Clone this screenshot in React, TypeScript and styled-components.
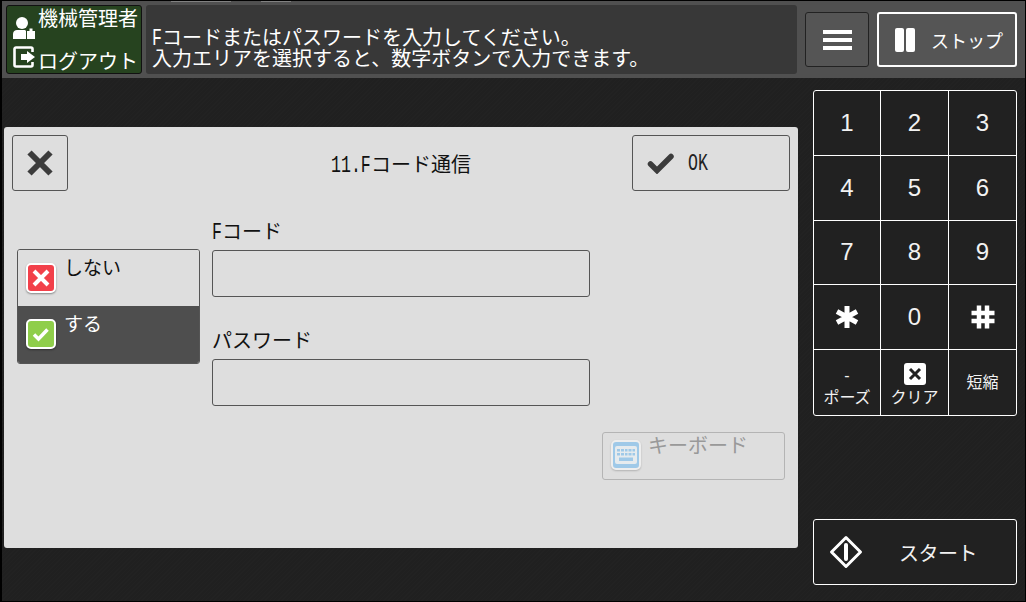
import styled, { createGlobalStyle } from "styled-components";

const GlobalStyle = createGlobalStyle`
  html, body {
    margin: 0;
    padding: 0;
    background: #000;
  }
  * {
    box-sizing: border-box;
  }
`;

const FONT = `"Liberation Sans", "Noto Sans CJK JP", sans-serif`;

const KEYS = ["1", "2", "3", "4", "5", "6", "7", "8", "9"];

export default function App() {
  return (
    <>
      <GlobalStyle />
      <Screen>
        <TopMarks>
          <TopMark $width={60} />
          <TopMark $width={30} />
        </TopMarks>
        <Header>
          <AdminBox>
            <AdminRow>
              <AdminIcon $top={9} viewBox="0 0 22 24">
                <circle cx="9" cy="7" r="6" fill="#fff" />
                <path d="M0 23v-5c0-2.500 2-4 4-4h7c1 0 2 .5 2 1v8z" fill="#fff" />
                <path d="M14 23v-8h2.500v-2.500h3V15H22v8z" fill="#fff" />
              </AdminIcon>
              <AdminName>機械管理者</AdminName>
            </AdminRow>
            <AdminRow>
              <AdminIcon $top={6} viewBox="0 0 22 24">
                <path
                  d="M19.500 6V3a1.500 1.500 0 0 0-1.500-1.500H3A1.500 1.500 0 0 0 1.500 3v16A1.500 1.500 0 0 0 3 20.500h15a1.500 1.500 0 0 0 1.500-1.500v-3"
                  fill="none"
                  stroke="#fff"
                  strokeWidth="2.600"
                />
                <path d="M8 8h6V5l8 6-8 6v-3H8z" fill="#fff" />
              </AdminIcon>
              <LogoutText>ログアウト</LogoutText>
            </AdminRow>
          </AdminBox>
          <MessageBox>
            <div>
              <Half $chars={1}>F</Half>コードまたはパスワードを入力してください。
            </div>
            <div>入力エリアを選択すると、数字ボタンで入力できます。</div>
          </MessageBox>
          <MenuButton>
            <MenuBar />
            <MenuBar />
            <MenuBar />
          </MenuButton>
          <StopButton>
            <PauseIcon>
              <PauseBar />
              <PauseBar />
            </PauseIcon>
            <StopLabel>ストップ</StopLabel>
          </StopButton>
        </Header>
        <Main>
          <LeftColumn>
            <Dialog>
              <DialogHead>
                <CloseButton>
                  <svg width="28" height="28" viewBox="0 0 28 28">
                    <path d="M3.500 3.500l21 21M24.500 3.500l-21 21" stroke="#3c3c3c" strokeWidth="6" />
                  </svg>
                </CloseButton>
                <DialogTitle>
                  <Half $chars={4}>11.F</Half>コード通信
                </DialogTitle>
                <OkButton>
                  <svg width="28" height="22" viewBox="0 0 28 22">
                    <path
                      d="M3.500 12l6.500 6.500L24 4.500"
                      fill="none"
                      stroke="#3c3c3c"
                      strokeWidth="5.500"
                      strokeLinecap="round"
                    />
                  </svg>
                  <OkLabel>
                    <Half $chars={2}>OK</Half>
                  </OkLabel>
                </OkButton>
              </DialogHead>
              <DialogBody>
                <ChoiceList>
                  <Choice>
                    <Badge $color="#f2404a">
                      <svg width="20" height="20" viewBox="0 0 20 20">
                        <path d="M3 3l14 14M17 3L3 17" stroke="#fff" strokeWidth="4" />
                      </svg>
                    </Badge>
                    <ChoiceLabel>しない</ChoiceLabel>
                  </Choice>
                  <Choice $selected>
                    <Badge $color="#8fce4a">
                      <svg width="20" height="20" viewBox="0 0 20 20">
                        <path d="M3 10.500l4.500 4.500 9-9.500" fill="none" stroke="#fff" strokeWidth="3.500" />
                      </svg>
                    </Badge>
                    <ChoiceLabel>する</ChoiceLabel>
                  </Choice>
                </ChoiceList>
                <Fields>
                  <Field>
                    <FieldLabel>
                      <Half $chars={1}>F</Half>コード
                    </FieldLabel>
                    <FieldInput />
                  </Field>
                  <Field>
                    <FieldLabel>パスワード</FieldLabel>
                    <FieldInput />
                  </Field>
                </Fields>
              </DialogBody>
              <KeyboardRow>
                <KeyboardButton>
                  <KeyboardBadge>
                    <svg width="22" height="20" viewBox="0 0 22 20">
                      <rect x="0" y="1" width="22" height="18" rx="2" fill="#e6ebee" />
                      <path
                        d="M2 4h3v2.500H2zM6 4h3v2.500H6zM10 4h2.500v2.500H10zM13.500 4h3v2.500h-3zM17.500 4H20v2.500h-2.500zM2 8h3v2.500H2zM6 8h3v2.500H6zM10 8h2.500v2.500H10zM13.500 8h3v2.500h-3zM17.500 8H20v2.500h-2.500zM4 12.500h14V16H4z"
                        fill="#9fc9e8"
                      />
                    </svg>
                  </KeyboardBadge>
                  <KeyboardLabel>キーボード</KeyboardLabel>
                </KeyboardButton>
              </KeyboardRow>
            </Dialog>
          </LeftColumn>
          <RightColumn>
            <Keypad>
              {KEYS.map((k) => (
                <Key key={k}>{k}</Key>
              ))}
              <Key>
                <svg width="26" height="26" viewBox="0 0 26 26">
                  <path d="M13 2v22M3 7.500l20 11M23 7.500l-20 11" stroke="#fff" strokeWidth="5" />
                </svg>
              </Key>
              <Key>0</Key>
              <Key>
                <svg width="26" height="26" viewBox="0 0 26 26">
                  <path d="M9 1.500v23M17 1.500v23M1.500 9h23M1.500 17h23" stroke="#fff" strokeWidth="4.500" />
                </svg>
              </Key>
              <StackedKey>
                <PauseDash>-</PauseDash>
                <span>ポーズ</span>
              </StackedKey>
              <StackedKey>
                <ClearIcon>
                  <svg width="14" height="14" viewBox="0 0 14 14">
                    <path d="M2 2l10 10M12 2L2 12" stroke="#222" strokeWidth="3" />
                  </svg>
                </ClearIcon>
                <span>クリア</span>
              </StackedKey>
              <SmallKey>短縮</SmallKey>
            </Keypad>
            <StartButton>
              <svg width="34" height="34" viewBox="0 0 34 34">
                <path
                  d="M17 2.500L31.500 17 17 31.500 2.500 17z"
                  fill="none"
                  stroke="#fff"
                  strokeWidth="3"
                  strokeLinejoin="round"
                />
                <path d="M17 10v14" stroke="#fff" strokeWidth="4" strokeLinecap="round" />
              </svg>
              <StartLabel>スタート</StartLabel>
            </StartButton>
          </RightColumn>
        </Main>
      </Screen>
    </>
  );
}

const Screen = styled.div`
  position: relative;
  width: 1026px;
  height: 602px;
  display: flex;
  flex-direction: column;
  border: 1px solid #000;
  border-left-width: 2px;
  background: #212121;
  font-family: ${FONT};
  overflow: hidden;
`;
const TopMarks = styled.div`
  position: absolute;
  top: 0;
  left: 169px;
  display: flex;
  gap: 30px;
`;
const TopMark = styled.div<{ $width: number }>`
  width: ${(p) => p.$width}px;
  height: 1px;
  background: #808080;
`;
/* the panel's half-width latin letters are tall and narrow */
const Half = styled.span<{ $chars: number }>`
  display: inline-block;
  width: ${(p) => p.$chars * 10}px;
  font-family: "Liberation Mono", monospace;
  font-size: 23px;
  line-height: 0;
  white-space: nowrap;
  transform: scaleX(0.72);
  transform-origin: left;
`;
const Header = styled.div`
  height: 77px;
  flex: none;
  display: flex;
  padding: 4px 8px 0 4px;
  background: #505050;
`;
const AdminBox = styled.div`
  width: 136px;
  height: 69px;
  display: flex;
  flex-direction: column;
  padding: 1px 2px 0 6px;
  background: #26431f;
  border: 1px solid #111;
  border-radius: 3px;
  color: #fff;
`;
const AdminRow = styled.div`
  height: 34px;
  display: flex;
  align-items: flex-start;
`;
const AdminIcon = styled.svg<{ $top: number }>`
  width: 22px;
  height: 24px;
  margin-top: ${(p) => p.$top}px;
  flex: none;
`;
const AdminName = styled.div`
  margin-left: 3px;
  font-size: 20px;
  line-height: 24px;
  white-space: nowrap;
`;
const LogoutText = styled.div`
  margin: 10px 0 0 3px;
  font-size: 20px;
  line-height: 24px;
  white-space: nowrap;
`;
const MessageBox = styled.div`
  width: 651px;
  height: 69px;
  margin-left: 4px;
  padding: 23px 0 0 6px;
  background: #383838;
  border-radius: 3px;
  color: #fff;
  font-size: 20px;
  line-height: 21px;
  white-space: nowrap;
`;
const MenuButton = styled.div`
  width: 64px;
  height: 55px;
  margin: 7px 0 0 8px;
  display: flex;
  flex-direction: column;
  align-items: center;
  justify-content: center;
  gap: 4px;
  background: #555;
  border: 1px solid #222;
  border-radius: 3px;
`;
const MenuBar = styled.div`
  width: 29px;
  height: 4px;
  background: #fff;
`;
const StopButton = styled.div`
  width: 140px;
  height: 55px;
  margin: 7px 0 0 8px;
  display: flex;
  align-items: center;
  padding-left: 16px;
  border: 2px solid #fff;
  border-radius: 3px;
  background: #555;
`;
const PauseIcon = styled.div`
  display: flex;
  gap: 2px;
`;
const PauseBar = styled.div`
  width: 9px;
  height: 24px;
  background: #fff;
  border-radius: 2px;
`;
const StopLabel = styled.div`
  margin-left: 16px;
  color: #fff;
  font-size: 18px;
`;
const Main = styled.div`
  flex: 1;
  display: flex;
  min-height: 0;
  background: repeating-linear-gradient(135deg, #222 0 1px, #202020 1px 3px);
`;
const LeftColumn = styled.div`
  width: 811px;
  padding: 49px 0 0 2px;
`;
const Dialog = styled.div`
  width: 794px;
  height: 421px;
  padding: 8px 8px 0 8px;
  display: flex;
  flex-direction: column;
  background: #dedede;
  border-radius: 3px;
`;
const DialogHead = styled.div`
  display: flex;
  align-items: center;
  height: 56px;
`;
const OutlineButton = styled.div`
  height: 56px;
  display: flex;
  align-items: center;
  background: #dedede;
  border: 1px solid #555;
  border-radius: 3px;
`;
const CloseButton = styled(OutlineButton)`
  width: 56px;
  justify-content: center;
`;
const DialogTitle = styled.div`
  flex: 1;
  padding-left: 102px;
  text-align: center;
  color: #111;
  font-size: 20px;
`;
const OkButton = styled(OutlineButton)`
  width: 158px;
  padding-left: 14px;
`;
const OkLabel = styled.div`
  margin-left: 13px;
  color: #222;
  font-size: 20px;
`;
const DialogBody = styled.div`
  display: flex;
  align-items: flex-start;
  padding: 29px 0 0 5px;
`;
const ChoiceList = styled.div`
  width: 183px;
  margin-top: 29px;
  border: 1px solid #555;
  border-radius: 3px;
  overflow: hidden;
`;
const Choice = styled.div<{ $selected?: boolean }>`
  height: ${(p) => (p.$selected ? 57 : 56)}px;
  display: flex;
  padding: 6px 0 0 8px;
  background: ${(p) => (p.$selected ? "#4e4e4e" : "#dedede")};
  color: ${(p) => (p.$selected ? "#fff" : "#111")};
`;
const Badge = styled.div<{ $color: string }>`
  width: 30px;
  height: 30px;
  margin-top: 7px;
  display: flex;
  align-items: center;
  justify-content: center;
  background: ${(p) => p.$color};
  border: 2px solid #fff;
  border-radius: 5px;
  box-shadow: 0 1px 2px rgba(0, 0, 0, 0.4);
`;
const ChoiceLabel = styled.div`
  margin: 1px 0 0 8px;
  font-size: 19px;
  line-height: 24px;
`;
const Fields = styled.div`
  margin-left: 12px;
  width: 378px;
  display: flex;
  flex-direction: column;
  gap: 32px;
`;
const Field = styled.div`
  display: flex;
  flex-direction: column;
  gap: 6px;
`;
const FieldLabel = styled.div`
  color: #111;
  font-size: 20px;
  line-height: 24px;
  height: 24px;
`;
const FieldInput = styled.div`
  height: 47px;
  background: #dedede;
  border: 1px solid #555;
  border-radius: 3px;
`;
const KeyboardRow = styled.div`
  display: flex;
  justify-content: flex-end;
  margin-top: 26px;
  padding-right: 5px;
`;
const KeyboardButton = styled.div`
  width: 183px;
  height: 48px;
  display: flex;
  padding: 7px 0 0 8px;
  border: 1px solid #b4b4b4;
  border-radius: 3px;
`;
const KeyboardBadge = styled.div`
  width: 30px;
  height: 30px;
  display: flex;
  align-items: center;
  justify-content: center;
  background: #9fc9e8;
  border: 2px solid #eee;
  border-radius: 5px;
  box-shadow: 0 1px 2px rgba(0, 0, 0, 0.2);
`;
const KeyboardLabel = styled.div`
  margin: -6px 0 0 7px;
  color: #999;
  font-size: 20px;
  line-height: 24px;
`;
const RightColumn = styled.div`
  width: 204px;
  padding-top: 12px;
  display: flex;
  flex-direction: column;
`;
const Keypad = styled.div`
  height: 326px;
  display: grid;
  grid-template-columns: 67px 68px 1fr;
  grid-template-rows: repeat(5, 1fr);
  background: #212121;
  border: 1px solid #fff;
  border-radius: 3px;
  overflow: hidden;
`;
const Key = styled.div`
  display: flex;
  align-items: center;
  justify-content: center;
  color: #f2f2f2;
  font-size: 24px;
  border-right: 1px solid #fff;
  border-bottom: 1px solid #fff;
  &:nth-child(3n) {
    border-right: none;
  }
  &:nth-last-child(-n + 3) {
    border-bottom: none;
  }
`;
const SmallKey = styled(Key)`
  flex-direction: column;
  font-size: 16px;
  line-height: 20px;
`;
const StackedKey = styled(SmallKey)`
  justify-content: flex-start;
  padding-top: 13px;
`;
const PauseDash = styled.span`
  height: 25px;
  line-height: 25px;
`;
const ClearIcon = styled.div`
  width: 22px;
  height: 22px;
  margin-bottom: 3px;
  display: flex;
  align-items: center;
  justify-content: center;
  background: #fff;
  border-radius: 3px;
`;
const StartButton = styled.div`
  height: 66px;
  margin-top: 103px;
  display: flex;
  align-items: center;
  padding-left: 15px;
  background: #212121;
  border: 1px solid #fff;
  border-radius: 3px;
`;
const StartLabel = styled.div`
  margin-left: 36px;
  color: #f2f2f2;
  font-size: 20px;
  letter-spacing: -0.5px;
`;
